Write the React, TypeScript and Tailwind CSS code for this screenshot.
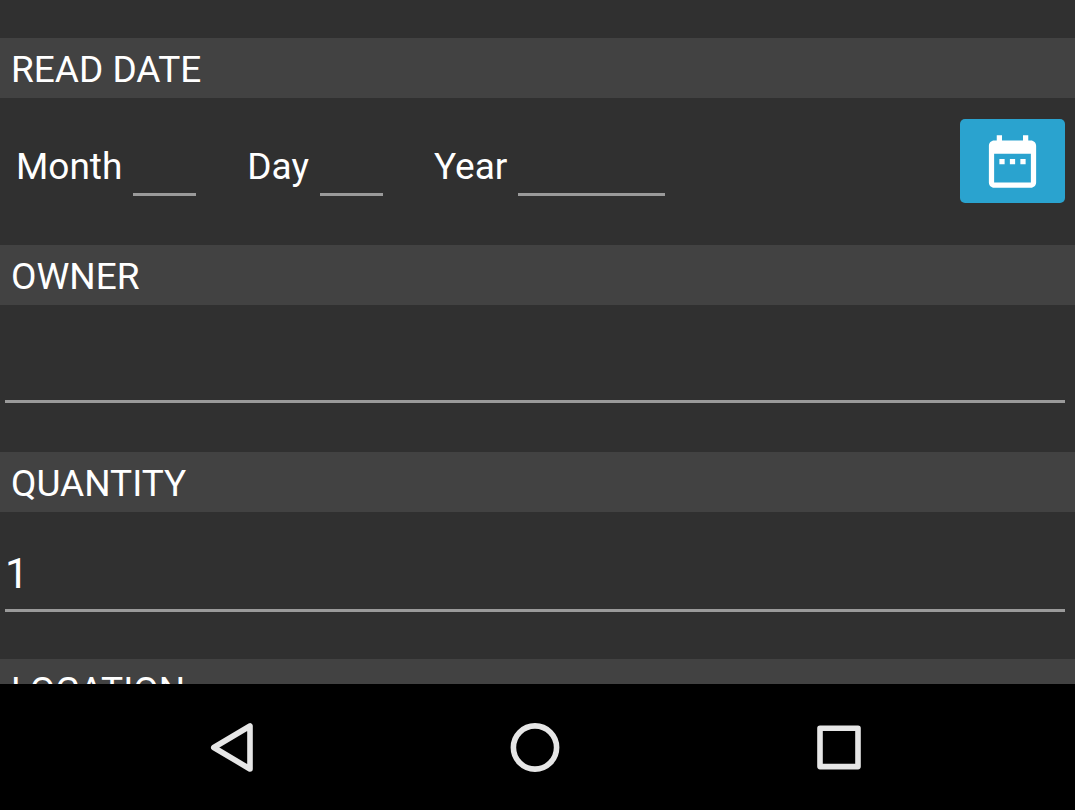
import type { ReactNode } from "react";

type SectionProps = { title: string; htmlFor?: string; children?: ReactNode };

function Section({ title, htmlFor, children }: SectionProps) {
  return (
    <section>
      <h2 className="h-[60px] bg-[#424242] pl-[11px] pt-1 text-[37px] leading-[56px]">
        {htmlFor ? <label htmlFor={htmlFor}>{title}</label> : title}
      </h2>
      <div className="h-[147px]">{children}</div>
    </section>
  );
}

type DateFieldProps = { id: string; label: string; wide?: boolean };

function DateField({ id, label, wide }: DateFieldProps) {
  return (
    <div className="flex items-end gap-[11px]">
      <label htmlFor={id} className="mb-[7px] text-[37px] leading-[44px]">
        {label}
      </label>
      <input
        id={id}
        inputMode="numeric"
        className={`${wide ? "w-[147px]" : "w-[63px]"} h-14 border-b-3 border-[#9a9a9a] bg-transparent text-[37px] outline-none`}
      />
    </div>
  );
}

function TextField({ id, value }: { id: string; value?: string }) {
  return (
    <div className={`pl-[5px] pr-[10px] ${value ? "pt-[28px]" : "pt-[26px]"}`}>
      <input
        id={id}
        defaultValue={value}
        className="h-[72px] w-full border-b-3 border-[#9a9a9a] bg-transparent pb-[2px] text-[42px] outline-none"
      />
    </div>
  );
}

function NavButton({ label, children }: { label: string; children: ReactNode }) {
  return (
    <button type="button" aria-label={label} className="flex items-center justify-center">
      <svg
        viewBox="0 0 64 64"
        className="size-16"
        fill="none"
        stroke="#e6e6e6"
        strokeWidth="5.6"
        strokeLinejoin="round"
      >
        {children}
      </svg>
    </button>
  );
}

export default function App() {
  return (
    <div className="flex h-screen flex-col bg-black font-[Roboto,sans-serif] text-white">
      <main className="min-h-0 flex-1 overflow-hidden bg-[#303030] pt-[38px]">
        <Section title="READ DATE">
          <div className="flex justify-between pl-4 pr-[10px] pt-[21px]">
            <div className="flex items-end gap-[51px] pb-[7px]">
              <DateField id="month" label="Month" />
              <DateField id="day" label="Day" />
              <DateField id="year" label="Year" wide />
            </div>
            <button
              type="button"
              aria-label="Pick date"
              className="flex h-[84px] w-[105px] items-center justify-center rounded-[5px] bg-[#2aa3cf]"
            >
              <svg viewBox="0 0 24 24" className="size-[63px]" fill="#ffffff">
                <path d="M9 11H7v2h2v-2zm4 0h-2v2h2v-2zm4 0h-2v2h2v-2zm2-7h-1V2h-2v2H8V2H6v2H5c-1.11 0-1.99.9-1.99 2L3 20c0 1.1.89 2 2 2h14c1.1 0 2-.9 2-2V6c0-1.1-.9-2-2-2zm0 16H5V9h14v11z" />
              </svg>
            </button>
          </div>
        </Section>
        <Section title="OWNER" htmlFor="owner">
          <TextField id="owner" />
        </Section>
        <Section title="QUANTITY" htmlFor="quantity">
          <TextField id="quantity" value="1" />
        </Section>
        <Section title="LOCATION" />
      </main>
      <nav className="grid h-[126px] shrink-0 grid-cols-3 bg-black pl-20 pr-[84px]">
        <NavButton label="Back">
          <path d="M13.8 32.5 50 11v43z" />
        </NavButton>
        <NavButton label="Home">
          <circle cx="32" cy="32.5" r="21.6" />
        </NavButton>
        <NavButton label="Recent apps">
          <rect x="13" y="13.2" width="38" height="38.4" />
        </NavButton>
      </nav>
    </div>
  );
}
